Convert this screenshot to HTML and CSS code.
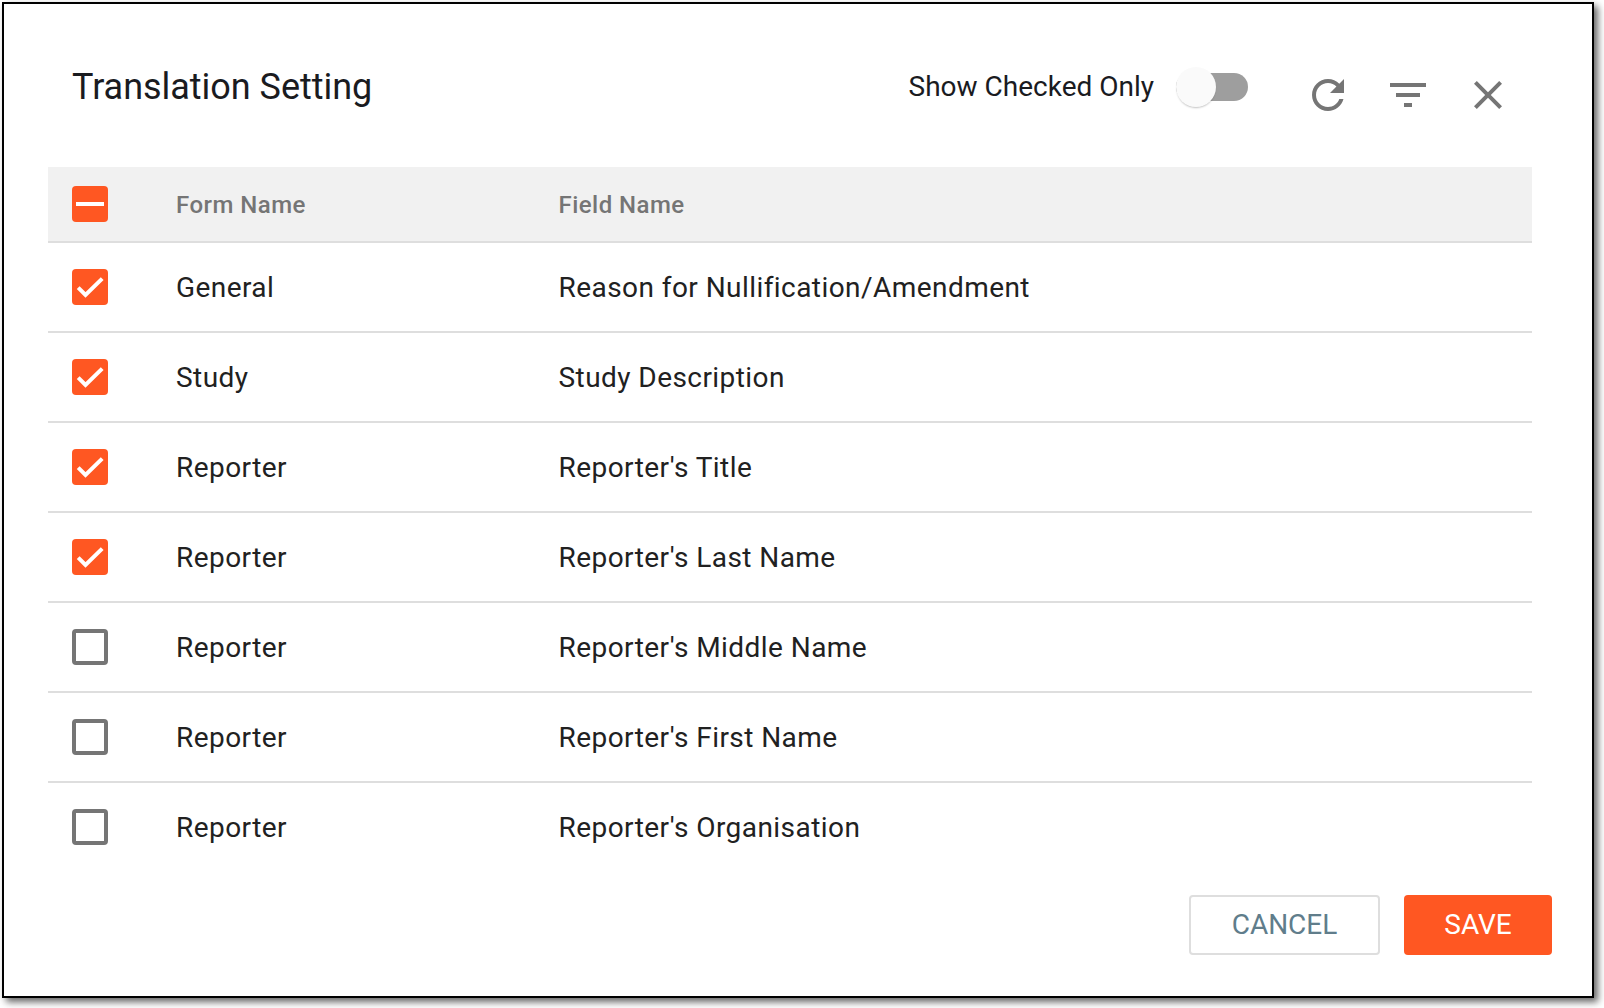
FILE: index.html
```html
<!DOCTYPE html>
<html lang="en">
<head>
    <meta charset="UTF-8">
    <meta name="viewport" content="width=device-width, initial-scale=1.0">
    <title>Translation Setting</title>

    <link rel="stylesheet" href="styles.css">
</head>
<body>

<div class="dialog">
    <header>
        <h1>Translation Setting</h1>
        <label class="toggle-label" for="checkedOnly">Show Checked Only</label>
        <input type="checkbox" id="checkedOnly" class="toggle">
        <div class="icons">
            <button type="button" class="icon" aria-label="Refresh">
                <svg viewBox="0 0 24 24"><path d="M17.65 6.35C16.2 4.9 14.21 4 12 4c-4.42 0-7.99 3.58-7.99 8s3.57 8 7.99 8c3.73 0 6.84-2.55 7.73-6h-2.08c-.82 2.33-3.04 4-5.65 4-3.31 0-6-2.69-6-6s2.69-6 6-6c1.66 0 3.14.69 4.22 1.78L13 11h7V4l-2.35 2.35z"/></svg>
            </button>
            <button type="button" class="icon" aria-label="Filter">
                <svg viewBox="0 0 24 24"><path d="M10 18h4v-2h-4v2zM3 6v2h18V6H3zm3 7h12v-2H6v2z"/></svg>
            </button>
            <button type="button" class="icon" aria-label="Close">
                <svg viewBox="0 0 24 24"><path d="M19 6.41L17.59 5 12 10.59 6.41 5 5 6.41 10.59 12 5 17.59 6.41 19 12 13.41 17.59 19 19 17.59 13.41 12z"/></svg>
            </button>
        </div>
    </header>

    <div class="table">
        <div class="row head">
            <span class="box some"><svg viewBox="0 0 36 36"><path d="M4 18h28"/></svg></span>
            <span class="name">Form Name</span>
            <span class="name">Field Name</span>
        </div>
        <div class="row">
            <span class="box checked"><svg viewBox="0 0 36 36"><path d="M6.2 18.6l7.3 7.3L30.2 9.6"/></svg></span>
            <span>General</span>
            <span>Reason for Nullification/Amendment</span>
        </div>
        <div class="row">
            <span class="box checked"><svg viewBox="0 0 36 36"><path d="M6.2 18.6l7.3 7.3L30.2 9.6"/></svg></span>
            <span>Study</span>
            <span>Study Description</span>
        </div>
        <div class="row">
            <span class="box checked"><svg viewBox="0 0 36 36"><path d="M6.2 18.6l7.3 7.3L30.2 9.6"/></svg></span>
            <span>Reporter</span>
            <span>Reporter's Title</span>
        </div>
        <div class="row">
            <span class="box checked"><svg viewBox="0 0 36 36"><path d="M6.2 18.6l7.3 7.3L30.2 9.6"/></svg></span>
            <span>Reporter</span>
            <span>Reporter's Last Name</span>
        </div>
        <div class="row">
            <span class="box"></span>
            <span>Reporter</span>
            <span>Reporter's Middle Name</span>
        </div>
        <div class="row">
            <span class="box"></span>
            <span>Reporter</span>
            <span>Reporter's First Name</span>
        </div>
        <div class="row">
            <span class="box"></span>
            <span>Reporter</span>
            <span>Reporter's Organisation</span>
        </div>
    </div>

    <footer>
        <button type="button" class="btn cancel">CANCEL</button>
        <button type="button" class="btn save">SAVE</button>
    </footer>
</div>

</body>
</html>
```
FILE: styles.css
```css
* {
    margin: 0;
    padding: 0;
    box-sizing: border-box;
}

body {
    font-family: Roboto, sans-serif;
    background-color: white;
    padding: 2px;
    min-height: 100vh;
    overflow: hidden;
}

.dialog {
    width: 1592px;
    height: 996px;
    border: 2px solid black;
    background-color: white;
    box-shadow: 4px 4px 7px rgba(0, 0, 0, 0.6);
}

header {
    display: flex;
    align-items: flex-start;
    height: 163px;
    padding: 61px 80px 0 68px;
    color: #1a1b1f;
}

header h1 {
    font-size: 36px;
    font-weight: 400;
    line-height: 44px;
    letter-spacing: -0.03px;
    flex: 1;
}

.toggle-label {
    font-size: 28px;
    line-height: 44px;
}

.toggle {
    appearance: none;
    display: flex;
    align-items: center;
    width: 72px;
    height: 28px;
    margin: 8px 56px 0 22px;
    border-radius: 14px;
    background-color: #9e9e9e;
}

.toggle::before {
    content: "";
    width: 40px;
    height: 40px;
    flex-shrink: 0;
    border-radius: 50%;
    background-color: #fafafa;
    box-shadow: 0 2px 2px -1px rgba(0, 0, 0, 0.25);
}

.icons {
    display: flex;
    gap: 32px;
    padding-top: 6px;
}

.icon {
    width: 48px;
    height: 48px;
    border: none;
    background: none;
}

.icon svg {
    display: block;
    width: 48px;
    height: 48px;
    fill: #757575;
}

.table {
    width: 1484px;
    margin-left: 44px;
}

.row {
    display: grid;
    grid-template-columns: 104px 382.5px 1fr;
    align-items: center;
    height: 90px;
    padding-left: 24px;
    border-bottom: 2px solid #dedede;
    color: #212121;
    font-size: 28px;
    letter-spacing: 0.44px;
}

.row:last-child {
    border-bottom-color: transparent;
}

.head {
    height: 76px;
    background-color: #f1f1f1;
    color: #757575;
    font-size: 24px;
    font-weight: 500;
    letter-spacing: 0.46px;
}

.name {
    padding-top: 2px;
}

.box {
    width: 36px;
    height: 36px;
    border: 4px solid #757575;
    border-radius: 4px;
}

.box.checked, .box.some {
    border: none;
    background-color: #ff5722;
}

.box svg {
    display: block;
    fill: none;
    stroke: white;
    stroke-width: 4;
}

footer {
    display: flex;
    justify-content: flex-end;
    gap: 24px;
    padding: 22px 40px 0 0;
}

.btn {
    height: 60px;
    border: none;
    border-radius: 4px;
    font-family: inherit;
    font-size: 28px;
    padding-bottom: 1px;
}

.cancel {
    width: 191px;
    border: 2px solid #dedede;
    background-color: white;
    color: #607d8b;
}

.save {
    width: 148px;
    background-color: #ff5722;
    color: white;
}
```
